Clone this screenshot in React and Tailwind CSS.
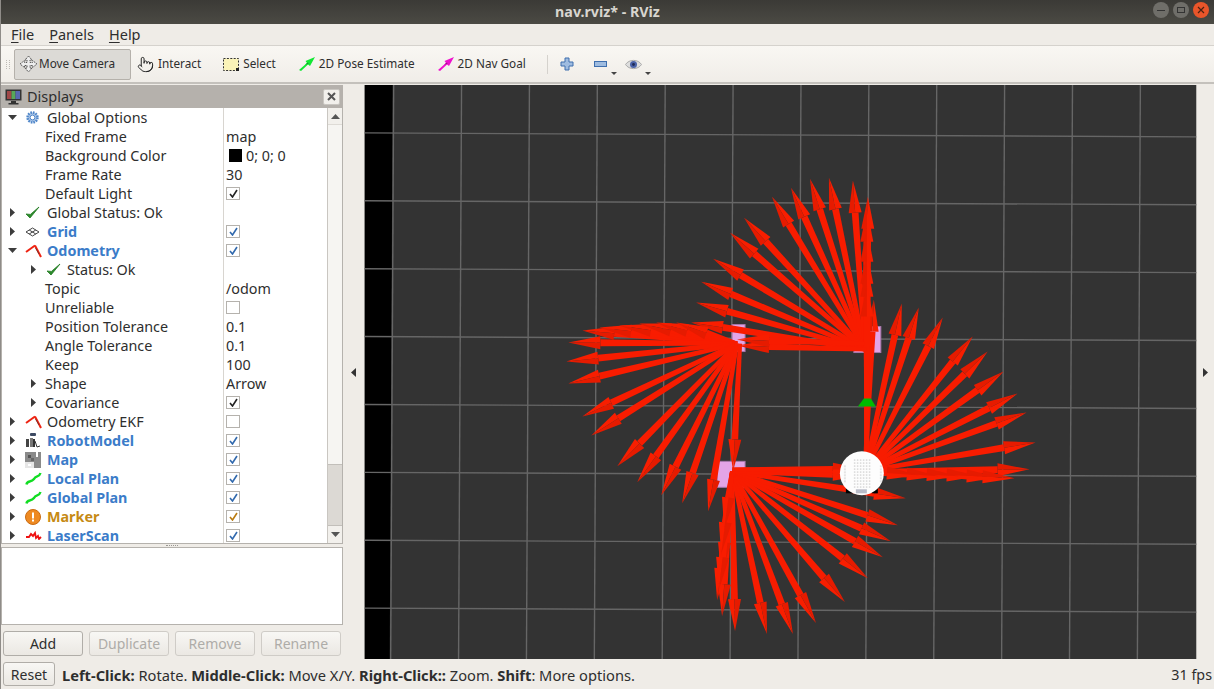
import React from 'react';
import { Pointer } from 'lucide-react';

const GROUPS = [
  { from: [866, 350], tips: [[692, 323], [697, 303], [702, 282], [714, 259], [731, 233], [745, 218], [773, 197], [792, 188], [811, 179], [830, 178], [854, 181]] },
  { from: [738, 344], tips: [[583, 331], [600, 328], [620, 326], [640, 324], [657, 323], [677, 323], [569, 343], [567, 362], [569, 384], [583, 417], [592, 436], [618, 467], [638, 483], [662, 496], [683, 504], [709, 512]] },
  { from: [733, 472], tips: [[718, 601], [723, 617], [736, 632], [768, 635], [794, 635], [817, 624], [846, 603], [869, 579], [884, 558], [892, 542], [899, 526], [907, 499], [722, 575], [720, 590], [722, 555], [725, 530]] },
  { from: [866, 472], tips: [[875, 300], [903, 304], [920, 308], [944, 318], [974, 337], [989, 352], [1005, 372], [1019, 394], [1028, 413], [1037, 443], [1031, 470], [1016, 479], [1000, 478], [980, 477], [960, 477], [940, 477], [920, 476]] },
];

const STACK = [
  [[868, 470], [869, 197]],
  [[868, 470], [868, 210]],
  [[868, 470], [868, 230]],
  [[868, 470], [868, 252]],
  [[868, 470], [868, 265]],
  [[868, 470], [868, 285]],
  [[868, 350], [738, 346]],
  [[866, 344], [738, 340]],
  [[741, 344], [734, 472]],
  [[733, 472], [866, 476]],
  [[733, 470], [866, 470]],
];

const points = (list) => list.map((p) => p.map((n) => n.toFixed(1)).join(',')).join(' ');

const Arrow = ({ from, tip }) => {
  const dx = tip[0] - from[0];
  const dy = tip[1] - from[1];
  const len = Math.hypot(dx, dy);
  const ux = dx / len;
  const uy = dy / len;
  const nx = -uy;
  const ny = ux;
  const neck = [tip[0] - ux * 32, tip[1] - uy * 32];
  const side = (p, w) => [p[0] + nx * w, p[1] + ny * w];
  return (
    <g>
      <polygon fill="#f81c00" points={points([side(from, 2), side(neck, 3.4), side(neck, -3.4), side(from, -2)])} />
      <polygon fill="#f81e00" points={points([tip, side(neck, 6.5), neck])} />
      <polygon fill="#e61b00" points={points([tip, neck, side(neck, -6.5)])} />
    </g>
  );
};

const RobotDots = () => {
  const dots = [];
  for (let x = 855; x < 873; x += 3) {
    for (let y = 460; y < 488; y += 3) {
      dots.push(<rect key={`${x}-${y}`} x={x} y={y} width="1.5" height="1.5" fill="#d8d8d8" />);
    }
  }
  for (let y = 466; y < 484; y += 3) {
    dots.push(<rect key={`l${y}`} x="845" y={y} width="2" height="2" fill="#e4e4e4" />);
    dots.push(<rect key={`r${y}`} x="881" y={y} width="2" height="2" fill="#e4e4e4" />);
  }
  return dots;
};

const Scene = () => {
  const vertical = [394, 462, 530, 598, 666, 734, 802, 870, 938, 1006, 1074, 1142];
  const horizontal = [133, 201, 269, 337, 405, 473, 541, 609];
  return (
    <svg viewBox="365 85 833 575" className="block h-full w-full">
      <rect x="365" y="85" width="833" height="575" fill="#333333" />
      <polygon points="365,85 393,85 390,660 365,660" fill="#000000" />
      {vertical.map((x) => (
        <line key={x} x1={x} y1="85" x2={x - 3} y2="660" stroke="#666666" strokeWidth="1.4" />
      ))}
      {horizontal.map((y) => (
        <line key={y} x1="365" y1={y} x2="1198" y2={y + 4} stroke="#666666" strokeWidth="1.4" />
      ))}
      <g fill="#e3a4e6" stroke="#a878ad" strokeWidth="1">
        <rect x="733" y="325" width="13" height="27" />
        <rect x="855" y="327" width="27" height="26" />
        <rect x="718" y="462" width="28" height="26" />
      </g>
      {GROUPS.map((group, i) =>
        group.tips.map((tip, j) => <Arrow key={`${i}-${j}`} from={group.from} tip={tip} />)
      )}
      {STACK.map(([from, tip], i) => (
        <Arrow key={i} from={from} tip={tip} />
      ))}
      <polygon points="859,407 877,407 872,399 865,399" fill="#00bb00" />
      <rect x="847" y="486" width="7" height="8" fill="#000000" />
      <rect x="873" y="486" width="6" height="8" fill="#000000" />
      <circle cx="863" cy="474" r="22" fill="#fdfdfd" />
      <RobotDots />
      <rect x="857" y="490" width="11" height="4" fill="#b8bcc8" />
    </svg>
  );
};

const TreeArrow = ({ open }) => (
  <svg width="9" height="9" viewBox="0 0 9 9" className="shrink-0">
    {open ? <polygon points="0,2 9,2 4.5,7" fill="#3c3c3c" /> : <polygon points="2,0 7,4.5 2,9" fill="#3c3c3c" />}
  </svg>
);

const GearIcon = () => (
  <svg width="15" height="15" viewBox="0 0 15 15">
    <circle cx="7.5" cy="7.5" r="5" fill="#a9c4e6" stroke="#4f86c9" strokeWidth="2.4" strokeDasharray="1.6 1" />
    <circle cx="7.5" cy="7.5" r="2.4" fill="#ffffff" stroke="#4f86c9" />
  </svg>
);

const CheckIcon = () => (
  <svg width="15" height="14" viewBox="0 0 15 14">
    <path d="M1 8 L5 12 L14 1 L5.4 8.4 Z" fill="#2c8a2c" stroke="#1f7a1f" strokeWidth="0.8" />
  </svg>
);

const GridIcon = () => (
  <svg width="15" height="10" viewBox="0 0 15 10" fill="none" stroke="#444444">
    <path d="M1 5 L7.5 1 L14 5 L7.5 9 Z M4.2 3 L10.8 7 M10.8 3 L4.2 7" />
  </svg>
);

const OdomIcon = () => (
  <svg width="17" height="14" viewBox="0 0 17 14" fill="none" strokeWidth="2">
    <path d="M1 8 L10 1.5" stroke="#ee2211" />
    <path d="M10 1.5 L16 13" stroke="#ee2211" />
    <path d="M10.5 4 L14 10" stroke="#333333" strokeWidth="0.6" />
  </svg>
);

const RobotIcon = () => (
  <svg width="16" height="15" viewBox="0 0 16 15">
    <rect x="5" y="0" width="6" height="3" rx="1" fill="#3d4a63" />
    <rect x="1" y="6" width="3" height="8" fill="#444444" />
    <rect x="5" y="5" width="3" height="9" fill="#777777" />
    <rect x="8" y="6" width="2" height="8" fill="#333333" />
    <path d="M10 8 L12 14 L15 13" fill="none" stroke="#333333" />
  </svg>
);

const MapIcon = () => (
  <svg width="16" height="16" viewBox="0 0 16 16" shapeRendering="crispEdges">
    <rect width="16" height="16" fill="#8a8a8a" />
    <rect x="11" y="0" width="2" height="5" fill="#ffffff" />
    <rect x="0" y="10" width="9" height="6" fill="#e6e6e6" />
    <rect x="3" y="3" width="3" height="3" fill="#555555" />
    <rect x="6" y="6" width="3" height="3" fill="#666666" />
    <rect x="3" y="12" width="3" height="2" fill="#ffffff" />
  </svg>
);

const PlanIcon = () => (
  <svg width="17" height="14" viewBox="0 0 17 14" fill="none">
    <path d="M1.5 12.5 C2 8 6 11 9 7 C11 3 14 6 15.5 1" stroke="#11dd22" strokeWidth="2.4" />
  </svg>
);

const WarnIcon = () => (
  <svg width="16" height="16" viewBox="0 0 16 16">
    <circle cx="8" cy="8" r="7.5" fill="#ee8a22" stroke="#c96a10" />
    <rect x="7" y="3.5" width="2" height="6" fill="#ffffff" />
    <rect x="7" y="10.5" width="2" height="2" fill="#ffffff" />
  </svg>
);

const ScanIcon = () => (
  <svg width="17" height="9" viewBox="0 0 17 9" fill="none">
    <path d="M1 6 L4 6 L6 3 L8 5 L10 2 L11 7 L13 5 L14 8 L16 6" stroke="#ee1111" strokeWidth="1.8" />
  </svg>
);

const MonitorIcon = () => (
  <svg width="17" height="16" viewBox="0 0 17 16">
    <rect x="0.5" y="0.5" width="16" height="11" fill="#333333" />
    <rect x="2" y="2" width="4.5" height="8" fill="#a04848" />
    <rect x="6.5" y="2" width="4" height="8" fill="#58a858" />
    <rect x="10.5" y="2" width="4.5" height="8" fill="#5868b0" />
    <rect x="6" y="12" width="5" height="2" fill="#333333" />
    <rect x="3.5" y="14" width="10" height="1.5" fill="#333333" />
  </svg>
);

const Checkbox = ({ checked, tone }) => (
  <span className="flex h-[13px] w-[14px] items-center justify-center border border-[#b5b2ad] bg-white">
    {checked && (
      <svg width="9" height="9" viewBox="0 0 9 9" fill="none">
        <path d="M1 5 L3.5 8 L8 1" stroke={tone} strokeWidth="1.6" />
      </svg>
    )}
  </span>
);

const BLUE = 'font-bold text-[#3b7cc9]';

const ROWS = [
  { name: 'Global Options', level: 'top', open: true, icon: <GearIcon /> },
  { name: 'Fixed Frame', level: 'prop', value: 'map' },
  { name: 'Background Color', level: 'prop', value: '0; 0; 0', swatch: true },
  { name: 'Frame Rate', level: 'prop', value: '30' },
  { name: 'Default Light', level: 'prop', check: true, tone: '#222222' },
  { name: 'Global Status: Ok', level: 'top', icon: <CheckIcon /> },
  { name: 'Grid', level: 'top', icon: <GridIcon />, style: BLUE, check: true, tone: '#3169ad' },
  { name: 'Odometry', level: 'top', open: true, icon: <OdomIcon />, style: BLUE, check: true, tone: '#3169ad' },
  { name: 'Status: Ok', level: 'status', icon: <CheckIcon /> },
  { name: 'Topic', level: 'prop', value: '/odom' },
  { name: 'Unreliable', level: 'prop', check: false },
  { name: 'Position Tolerance', level: 'prop', value: '0.1' },
  { name: 'Angle Tolerance', level: 'prop', value: '0.1' },
  { name: 'Keep', level: 'prop', value: '100' },
  { name: 'Shape', level: 'sub', value: 'Arrow' },
  { name: 'Covariance', level: 'sub', check: true, tone: '#222222' },
  { name: 'Odometry EKF', level: 'top', icon: <OdomIcon />, check: false },
  { name: 'RobotModel', level: 'top', icon: <RobotIcon />, style: BLUE, check: true, tone: '#3169ad' },
  { name: 'Map', level: 'top', icon: <MapIcon />, style: BLUE, check: true, tone: '#3169ad' },
  { name: 'Local Plan', level: 'top', icon: <PlanIcon />, style: BLUE, check: true, tone: '#3169ad' },
  { name: 'Global Plan', level: 'top', icon: <PlanIcon />, style: BLUE, check: true, tone: '#3169ad' },
  { name: 'Marker', level: 'top', icon: <WarnIcon />, style: 'font-bold text-[#c68a14]', check: true, tone: '#b97a10' },
  { name: 'LaserScan', level: 'top', icon: <ScanIcon />, style: BLUE, check: true, tone: '#3169ad' },
];

const NameCell = ({ row }) => {
  if (row.level === 'prop') return <div className="truncate pl-[43px]">{row.name}</div>;
  if (row.level === 'sub') {
    return (
      <div className="flex items-center pl-[27px]">
        <span className="flex w-[16px]"><TreeArrow /></span>
        <span>{row.name}</span>
      </div>
    );
  }
  if (row.level === 'status') {
    return (
      <div className="flex items-center pl-[27px]">
        <span className="flex w-[17px]"><TreeArrow /></span>
        <span className="flex w-[21px]">{row.icon}</span>
        <span>{row.name}</span>
      </div>
    );
  }
  return (
    <div className="flex items-center pl-[6px]">
      <span className="flex w-[17px]"><TreeArrow open={row.open} /></span>
      <span className="flex w-[22px] items-center">{row.icon}</span>
      <span className={row.style}>{row.name}</span>
    </div>
  );
};

const TreeRow = ({ row }) => (
  <div className="flex h-[19px] items-center">
    <div className="w-[221px] shrink-0 whitespace-nowrap"><NameCell row={row} /></div>
    <div className="flex h-full flex-1 items-center border-l border-[#d8d5d0] pl-[2px]">
      {row.swatch && <span className="mr-[4px] ml-[3px] h-[13px] w-[13px] bg-black" />}
      {row.value && <span>{row.value}</span>}
      {row.check !== undefined && <Checkbox checked={row.check} tone={row.tone} />}
    </div>
  </div>
);

const ScrollTriangle = ({ up }) => (
  <svg width="9" height="5" viewBox="0 0 9 5">
    <polygon points={up ? '0,5 9,5 4.5,0' : '0,0 9,0 4.5,5'} fill="#555555" />
  </svg>
);

const Scrollbar = () => (
  <div className="flex w-[15px] shrink-0 flex-col border-l border-[#c9c6c1] bg-[#f6f5f2]">
    <div className="flex h-[17px] items-center justify-center border-b border-[#dedbd6] bg-[#f2f0ec]"><ScrollTriangle up /></div>
    <div className="flex-1" />
    <div className="h-[62px] border-y border-[#c2bfba] bg-[#dcd9d4]" />
    <div className="flex h-[17px] items-center justify-center bg-[#f2f0ec]"><ScrollTriangle /></div>
  </div>
);

const PanelButton = ({ label, disabled }) => (
  <button className={`h-[25px] w-[80px] rounded-[3px] border bg-gradient-to-b from-[#f8f7f4] to-[#ebe8e3] text-[14px] ${disabled ? 'border-[#cfccc7] text-[#aeaca8]' : 'border-[#b0ada8] text-[#2e2e2e]'}`}>
    {label}
  </button>
);

const DisplaysPanel = () => (
  <div className="flex w-[342px] shrink-0 flex-col">
    <div className="flex h-[23px] items-center justify-between bg-[#b5b1ac] pr-[3px] pl-[4px]">
      <div className="flex items-center gap-[5px] text-[14.5px]"><MonitorIcon /><span>Displays</span></div>
      <span className="flex h-[16px] w-[17px] items-center justify-center rounded-[2px] border border-[#c9c6c1] bg-[#f2f0ec]">
        <svg width="9" height="9" viewBox="0 0 9 9" stroke="#555555" strokeWidth="2"><path d="M1 1 L8 8 M8 1 L1 8" /></svg>
      </span>
    </div>
    <div className="flex h-[436px] overflow-hidden border-x border-b border-[#b5b2ad] bg-white text-[14.35px]">
      <div className="h-full flex-1 overflow-hidden">
        {ROWS.map((row) => <TreeRow key={row.name} row={row} />)}
      </div>
      <Scrollbar />
    </div>
    <div className="flex h-[3px] items-center justify-center">
      <span className="h-px w-[12px] border-t border-dotted border-[#999793]" />
    </div>
    <div className="h-[78px] border border-[#b5b2ad] bg-white" />
    <div className="mt-[6px] flex gap-[6px] pl-[2px]">
      <PanelButton label="Add" />
      <PanelButton label="Duplicate" disabled />
      <PanelButton label="Remove" disabled />
      <PanelButton label="Rename" disabled />
    </div>
  </div>
);

const MoveIcon = () => (
  <svg width="19" height="18" viewBox="0 0 19 18" fill="#eeeeee" stroke="#555555" strokeDasharray="1.5 0.8">
    <path d="M9.5 1 L13 5 L11 5 L11 7.5 L13.5 7.5 L13.5 5.5 L18 9 L13.5 12.5 L13.5 10.5 L11 10.5 L11 13 L13 13 L9.5 17 L6 13 L8 13 L8 10.5 L5.5 10.5 L5.5 12.5 L1 9 L5.5 5.5 L5.5 7.5 L8 7.5 L8 5 L6 5 Z" />
  </svg>
);

const SelectIcon = () => (
  <svg width="16" height="13" viewBox="0 0 16 13">
    <rect x="0.5" y="0.5" width="15" height="12" fill="#faf3b8" stroke="#333333" strokeDasharray="2 1.4" />
    <rect x="13" y="10" width="3" height="3" fill="#222222" />
  </svg>
);

const GoalIcon = ({ color, dark }) => (
  <svg width="16" height="14" viewBox="0 0 16 14">
    <path d="M0 13 L2 14 L9 7.5 L11 9 L16 0 L6.5 4 L8 6 L0 13 Z" fill={color} />
    <path d="M6 7.5 L9 5.5 L9.5 7 Z" fill={dark} />
  </svg>
);

const ToolButton = ({ icon, label, className }) => (
  <div className={`flex items-center gap-[4px] ${className}`}>
    {icon}
    <span>{label}</span>
  </div>
);

const SmallCaret = () => (
  <svg width="6" height="3" viewBox="0 0 6 3" className="self-end">
    <polygon points="0,0 6,0 3,3" fill="#444444" />
  </svg>
);

const Toolbar = () => (
  <div className="flex h-[38px] items-center border-b-2 border-[#c4c1bc] bg-gradient-to-b from-[#f9f7f3] to-[#f0ede8] pl-[5px] text-[11.75px]">
    <div className="mr-[3px] grid w-[5px] grid-cols-2 gap-[1px]">
      {[0, 1, 2, 3, 4, 5, 6, 7, 8, 9].map((n) => <span key={n} className="h-px w-px bg-[#bdbab5]" />)}
    </div>
    <div className="flex h-[31px] w-[117px] items-center gap-[1px] rounded-[2px] border border-[#b5b1ab] bg-[#dcdad6] pl-[4px]">
      <MoveIcon />
      <span>Move Camera</span>
    </div>
    <ToolButton className="ml-[6px]" icon={<Pointer size={17} strokeWidth={1.4} color="#222222" />} label="Interact" />
    <ToolButton className="ml-[22px]" icon={<SelectIcon />} label="Select" />
    <ToolButton className="ml-[23px]" icon={<GoalIcon color="#11e833" dark="#0a9a22" />} label="2D Pose Estimate" />
    <ToolButton className="ml-[23px]" icon={<GoalIcon color="#ee11cc" dark="#991188" />} label="2D Nav Goal" />
    <span className="mr-[12px] ml-[21px] h-[19px] w-px bg-[#d5d2cd]" />
    <svg width="14" height="14" viewBox="0 0 14 14">
      <path d="M5 1 H9 V5 H13 V9 H9 V13 H5 V9 H1 V5 H5 Z" fill="#9fbce0" stroke="#3f6fae" />
    </svg>
    <span className="ml-[20px] flex h-[22px] items-center gap-[3px]">
      <svg width="14" height="6" viewBox="0 0 14 6">
        <rect x="0.5" y="0.5" width="12" height="5" fill="#9fbce0" stroke="#3f6fae" />
      </svg>
      <SmallCaret />
    </span>
    <span className="ml-[8px] flex h-[22px] items-center gap-[3px]">
      <svg width="17" height="11" viewBox="0 0 17 11">
        <path d="M0.5 5.5 C4 0 13 0 16.5 5.5 C13 11 4 11 0.5 5.5 Z" fill="#dddddd" stroke="#aaaaaa" />
        <circle cx="8.5" cy="5.5" r="3.5" fill="#4a62a8" />
        <circle cx="8.5" cy="5.5" r="1.4" fill="#1f2a55" />
      </svg>
      <SmallCaret />
    </span>
  </div>
);

const Underlined = ({ first, rest }) => (
  <span><span className="underline underline-offset-2">{first}</span>{rest}</span>
);

const WindowButton = ({ className, children }) => (
  <span className={`flex h-[16px] w-[16px] items-center justify-center rounded-full ${className}`}>{children}</span>
);

const SideCaret = ({ left }) => (
  <svg width="5" height="9" viewBox="0 0 5 9">
    <polygon points={left ? '5,0 5,9 0,4.5' : '0,0 0,9 5,4.5'} fill="#333333" />
  </svg>
);

export default function App() {
  return (
    <div className="flex h-[689px] w-[1214px] flex-col overflow-hidden border-l border-[#8f8c88] bg-[#efece7] font-['Noto_Sans',sans-serif] text-[14px] text-[#2e2e2e]">
      <div className="relative flex h-[24px] items-center justify-center bg-gradient-to-b from-[#3b3a36] to-[#4b4a44] text-[14.25px] font-bold text-[#d8d5cf]">
        <span>nav.rviz* - RViz</span>
        <div className="absolute top-[2px] right-[5px] flex gap-[4px]">
          <WindowButton className="bg-[#6f6e69]"><span className="h-px w-[8px] bg-[#333333]" /></WindowButton>
          <WindowButton className="bg-[#6f6e69]"><span className="h-[6px] w-[8px] border border-[#333333]" /></WindowButton>
          <WindowButton className="bg-[#e9552a]">
            <svg width="8" height="8" viewBox="0 0 8 8" stroke="#4a2010" strokeWidth="1.2"><path d="M1 1 L7 7 M7 1 L1 7" /></svg>
          </WindowButton>
        </div>
      </div>
      <div className="flex h-[22px] items-center gap-[15px] border-b border-[#d5d2cd] pl-[10px] text-[14.5px]">
        <Underlined first="F" rest="ile" />
        <Underlined first="P" rest="anels" />
        <Underlined first="H" rest="elp" />
      </div>
      <Toolbar />
      <div className="flex h-[575px] pt-px">
        <DisplaysPanel />
        <div className="flex w-[21px] shrink-0 items-center justify-center"><SideCaret left /></div>
        <div className="w-[833px] shrink-0"><Scene /></div>
        <div className="flex flex-1 items-center justify-center"><SideCaret /></div>
      </div>
      <div className="flex h-[30px] items-center pr-[2px] pl-[2px]">
        <button className="h-[24px] w-[52px] rounded-[3px] border border-[#b0ada8] bg-gradient-to-b from-[#f8f7f4] to-[#ebe8e3]">Reset</button>
        <p className="ml-[7px] flex-1 whitespace-pre pt-px text-[14.67px]">
          <b>Left-Click:</b> Rotate. <b>Middle-Click:</b> Move X/Y. <b>Right-Click::</b> Zoom. <b>Shift</b>: More options.
        </p>
        <span className="pt-px text-[14.3px]">31 fps</span>
      </div>
    </div>
  );
}
